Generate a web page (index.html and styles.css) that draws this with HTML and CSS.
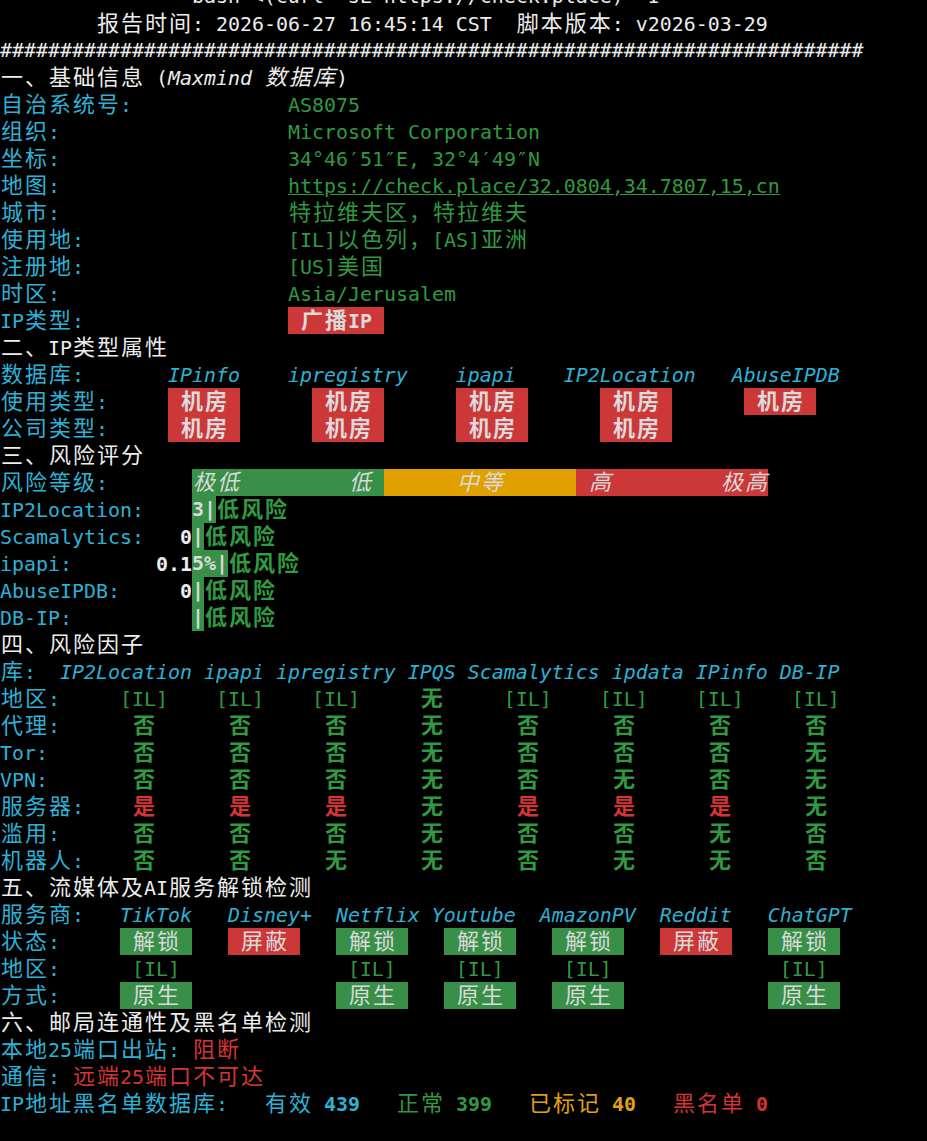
FILE: index.html
```html
<!DOCTYPE html>
<html lang="zh-CN">
<head>
<meta charset="utf-8">
<title>IP质量体检报告</title>
<link rel="stylesheet" href="styles.css">
</head>
<body>
<div class="term">
<div class="l">                bash &lt;(curl -sL https://check.place) -I</div>
<div class="l">        <span class="z">报告时间</span>: 2026-06-27 16:45:14 CST  <span class="z">脚本版本</span>: v2026-03-29</div>
<div class="l">########################################################################</div>
<div class="l"><span class="z">一、基础信息</span> (<span class="it">Maxmind <span class="z">数据库</span></span>)</div>
<div class="l"><span class="k c"><span class="z">自治系统号</span>:</span><span class="g">AS8075</span></div>
<div class="l"><span class="k c"><span class="z">组织</span>:</span><span class="g">Microsoft Corporation</span></div>
<div class="l"><span class="k c"><span class="z">坐标</span>:</span><span class="g">34°46′51″E, 32°4′49″N</span></div>
<div class="l"><span class="k c"><span class="z">地图</span>:</span><span class="g u">https://check.place/32.0804,34.7807,15,cn</span></div>
<div class="l"><span class="k c"><span class="z">城市</span>:</span><span class="g"><span class="z">特拉维夫区，特拉维夫</span></span></div>
<div class="l"><span class="k c"><span class="z">使用地</span>:</span><span class="g">[IL]<span class="z">以色列，</span>[AS]<span class="z">亚洲</span></span></div>
<div class="l"><span class="k c"><span class="z">注册地</span>:</span><span class="g">[US]<span class="z">美国</span></span></div>
<div class="l"><span class="k c"><span class="z">时区</span>:</span><span class="g">Asia/Jerusalem</span></div>
<div class="l"><span class="k c">IP<span class="z">类型</span>:</span><span class="box br b"> <span class="z">广播</span>IP </span></div>
<div class="l"><span class="z">二、</span>IP<span class="z">类型属性</span></div>
<div class="l"><span class="c"><span class="z">数据库</span>:       <span class="it">IPinfo    ipregistry    ipapi    IP2Location   AbuseIPDB</span></span></div>
<div class="l"><span class="c"><span class="z">使用类型</span>:</span>     <span class="box br b"> <span class="z">机房</span> </span>      <span class="box br b"> <span class="z">机房</span> </span>      <span class="box br b"> <span class="z">机房</span> </span>      <span class="box br b"> <span class="z">机房</span> </span>      <span class="box br b"> <span class="z">机房</span> </span></div>
<div class="l"><span class="c"><span class="z">公司类型</span>:</span>     <span class="box br b"> <span class="z">机房</span> </span>      <span class="box br b"> <span class="z">机房</span> </span>      <span class="box br b"> <span class="z">机房</span> </span>      <span class="box br b"> <span class="z">机房</span> </span></div>
<div class="l"><span class="z">三、风险评分</span></div>
<div class="l"><span class="c"><span class="z">风险等级</span>:</span>       <span class="box bg it"><span class="z">极低</span>         <span class="z">低</span> </span><span class="box bo it">      <span class="z">中等</span>      </span><span class="box br it"> <span class="z">高</span>         <span class="z">极高</span></span></div>
<div class="l"><span class="c">IP2Location:</span>    <span class="box bg b">3|</span><span class="g b"><span class="z">低风险</span></span></div>
<div class="l"><span class="c">Scamalytics:</span>   <span class="b">0</span><span class="box bg b">|</span><span class="g b"><span class="z">低风险</span></span></div>
<div class="l"><span class="c">ipapi:</span>       <span class="b">0.1</span><span class="box bg b">5%|</span><span class="g b"><span class="z">低风险</span></span></div>
<div class="l"><span class="c">AbuseIPDB:</span>     <span class="b">0</span><span class="box bg b">|</span><span class="g b"><span class="z">低风险</span></span></div>
<div class="l"><span class="c">DB-IP:</span>          <span class="box bg b">|</span><span class="g b"><span class="z">低风险</span></span></div>
<div class="l"><span class="z">四、风险因子</span></div>
<div class="l"><span class="c"><span class="z">库</span>:  <span class="it">IP2Location ipapi ipregistry IPQS Scamalytics ipdata IPinfo DB-IP</span></span></div>
<div class="l"><span class="c"><span class="z">地区</span>:</span>     <span class="g">[IL]    [IL]    [IL]     <span class="b z">无</span>     [IL]    [IL]    [IL]    [IL]</span></div>
<div class="l"><span class="c"><span class="z">代理</span>:</span>      <span class="g b"><span class="z">否</span>      <span class="z">否</span>      <span class="z">否</span>      <span class="z">无</span>      <span class="z">否</span>      <span class="z">否</span>      <span class="z">否</span>      <span class="z">否</span></span></div>
<div class="l"><span class="c">Tor:</span>       <span class="g b"><span class="z">否</span>      <span class="z">否</span>      <span class="z">否</span>      <span class="z">无</span>      <span class="z">否</span>      <span class="z">否</span>      <span class="z">否</span>      <span class="z">无</span></span></div>
<div class="l"><span class="c">VPN:</span>       <span class="g b"><span class="z">否</span>      <span class="z">否</span>      <span class="z">否</span>      <span class="z">无</span>      <span class="z">否</span>      <span class="z">无</span>      <span class="z">否</span>      <span class="z">无</span></span></div>
<div class="l"><span class="c"><span class="z">服务器</span>:</span>    <span class="b"><span class="r z">是</span>      <span class="r z">是</span>      <span class="r z">是</span>      <span class="g z">无</span>      <span class="r z">是</span>      <span class="r z">是</span>      <span class="r z">是</span>      <span class="g z">无</span></span></div>
<div class="l"><span class="c"><span class="z">滥用</span>:</span>      <span class="g b"><span class="z">否</span>      <span class="z">否</span>      <span class="z">否</span>      <span class="z">无</span>      <span class="z">否</span>      <span class="z">否</span>      <span class="z">无</span>      <span class="z">否</span></span></div>
<div class="l"><span class="c"><span class="z">机器人</span>:</span>    <span class="g b"><span class="z">否</span>      <span class="z">否</span>      <span class="z">无</span>      <span class="z">无</span>      <span class="z">否</span>      <span class="z">无</span>      <span class="z">无</span>      <span class="z">否</span></span></div>
<div class="l"><span class="z">五、流媒体及</span>AI<span class="z">服务解锁检测</span></div>
<div class="l"><span class="c"><span class="z">服务商</span>:   <span class="it">TikTok   Disney+  Netflix Youtube  AmazonPV  Reddit   ChatGPT</span></span></div>
<div class="l"><span class="c"><span class="z">状态</span>:</span>     <span class="box bg"> <span class="z">解锁</span> </span>   <span class="box br"> <span class="z">屏蔽</span> </span>   <span class="box bg"> <span class="z">解锁</span> </span>   <span class="box bg"> <span class="z">解锁</span> </span>   <span class="box bg"> <span class="z">解锁</span> </span>   <span class="box br"> <span class="z">屏蔽</span> </span>   <span class="box bg"> <span class="z">解锁</span> </span></div>
<div class="l"><span class="c"><span class="z">地区</span>:</span>      <span class="g">[IL]              [IL]     [IL]     [IL]              [IL]</span></div>
<div class="l"><span class="c"><span class="z">方式</span>:</span>     <span class="box bg"> <span class="z">原生</span> </span>            <span class="box bg"> <span class="z">原生</span> </span>   <span class="box bg"> <span class="z">原生</span> </span>   <span class="box bg"> <span class="z">原生</span> </span>            <span class="box bg"> <span class="z">原生</span> </span></div>
<div class="l"><span class="z">六、邮局连通性及黑名单检测</span></div>
<div class="l"><span class="c"><span class="z">本地</span>25<span class="z">端口出站</span>: </span><span class="r"><span class="z">阻断</span></span></div>
<div class="l"><span class="c"><span class="z">通信</span>: </span><span class="r"><span class="z">远端</span>25<span class="z">端口不可达</span></span></div>
<div class="l"><span class="c">IP<span class="z">地址黑名单数据库</span>:   <span class="z">有效</span> <span class="b">439</span></span>   <span class="g"><span class="z">正常</span> <span class="b">399</span></span>   <span class="o"><span class="z">已标记</span> <span class="b">40</span></span>   <span class="r"><span class="z">黑名单</span> <span class="b">0</span></span></div>
</div>
</body>
</html>
```
FILE: styles.css
```css
html, body {
  margin: 0;
  padding: 0;
  background: #000;
}
body {
  width: 927px;
  height: 1141px;
  overflow: hidden;
}
.term {
  margin-top: -17px;
  font-family: "DejaVu Sans Mono", "Noto Sans CJK SC", monospace;
  font-size: 19.93px;
  color: #ececec;
}
.l {
  height: 27px;
  line-height: 27px;
  white-space: pre;
}
.z {
  font-size: 22px;
  letter-spacing: 2px;
  padding-left: 1px;
  margin-right: -1px;
}
.k {
  display: inline-block;
  width: 288px;
}
.c { color: #2cb2d6; }
.g { color: #2f9a40; }
.r { color: #d33535; }
.o { color: #e2a20c; }
.b { font-weight: bold; }
.it { font-style: italic; }
.u { text-decoration: underline; }
.box {
  display: inline-block;
  height: 27px;
  line-height: 27px;
  vertical-align: top;
  color: #dadada;
}
.bg { background: #388f48; }
.br { background: #cc3838; }
.bo { background: #e0a000; }
```
